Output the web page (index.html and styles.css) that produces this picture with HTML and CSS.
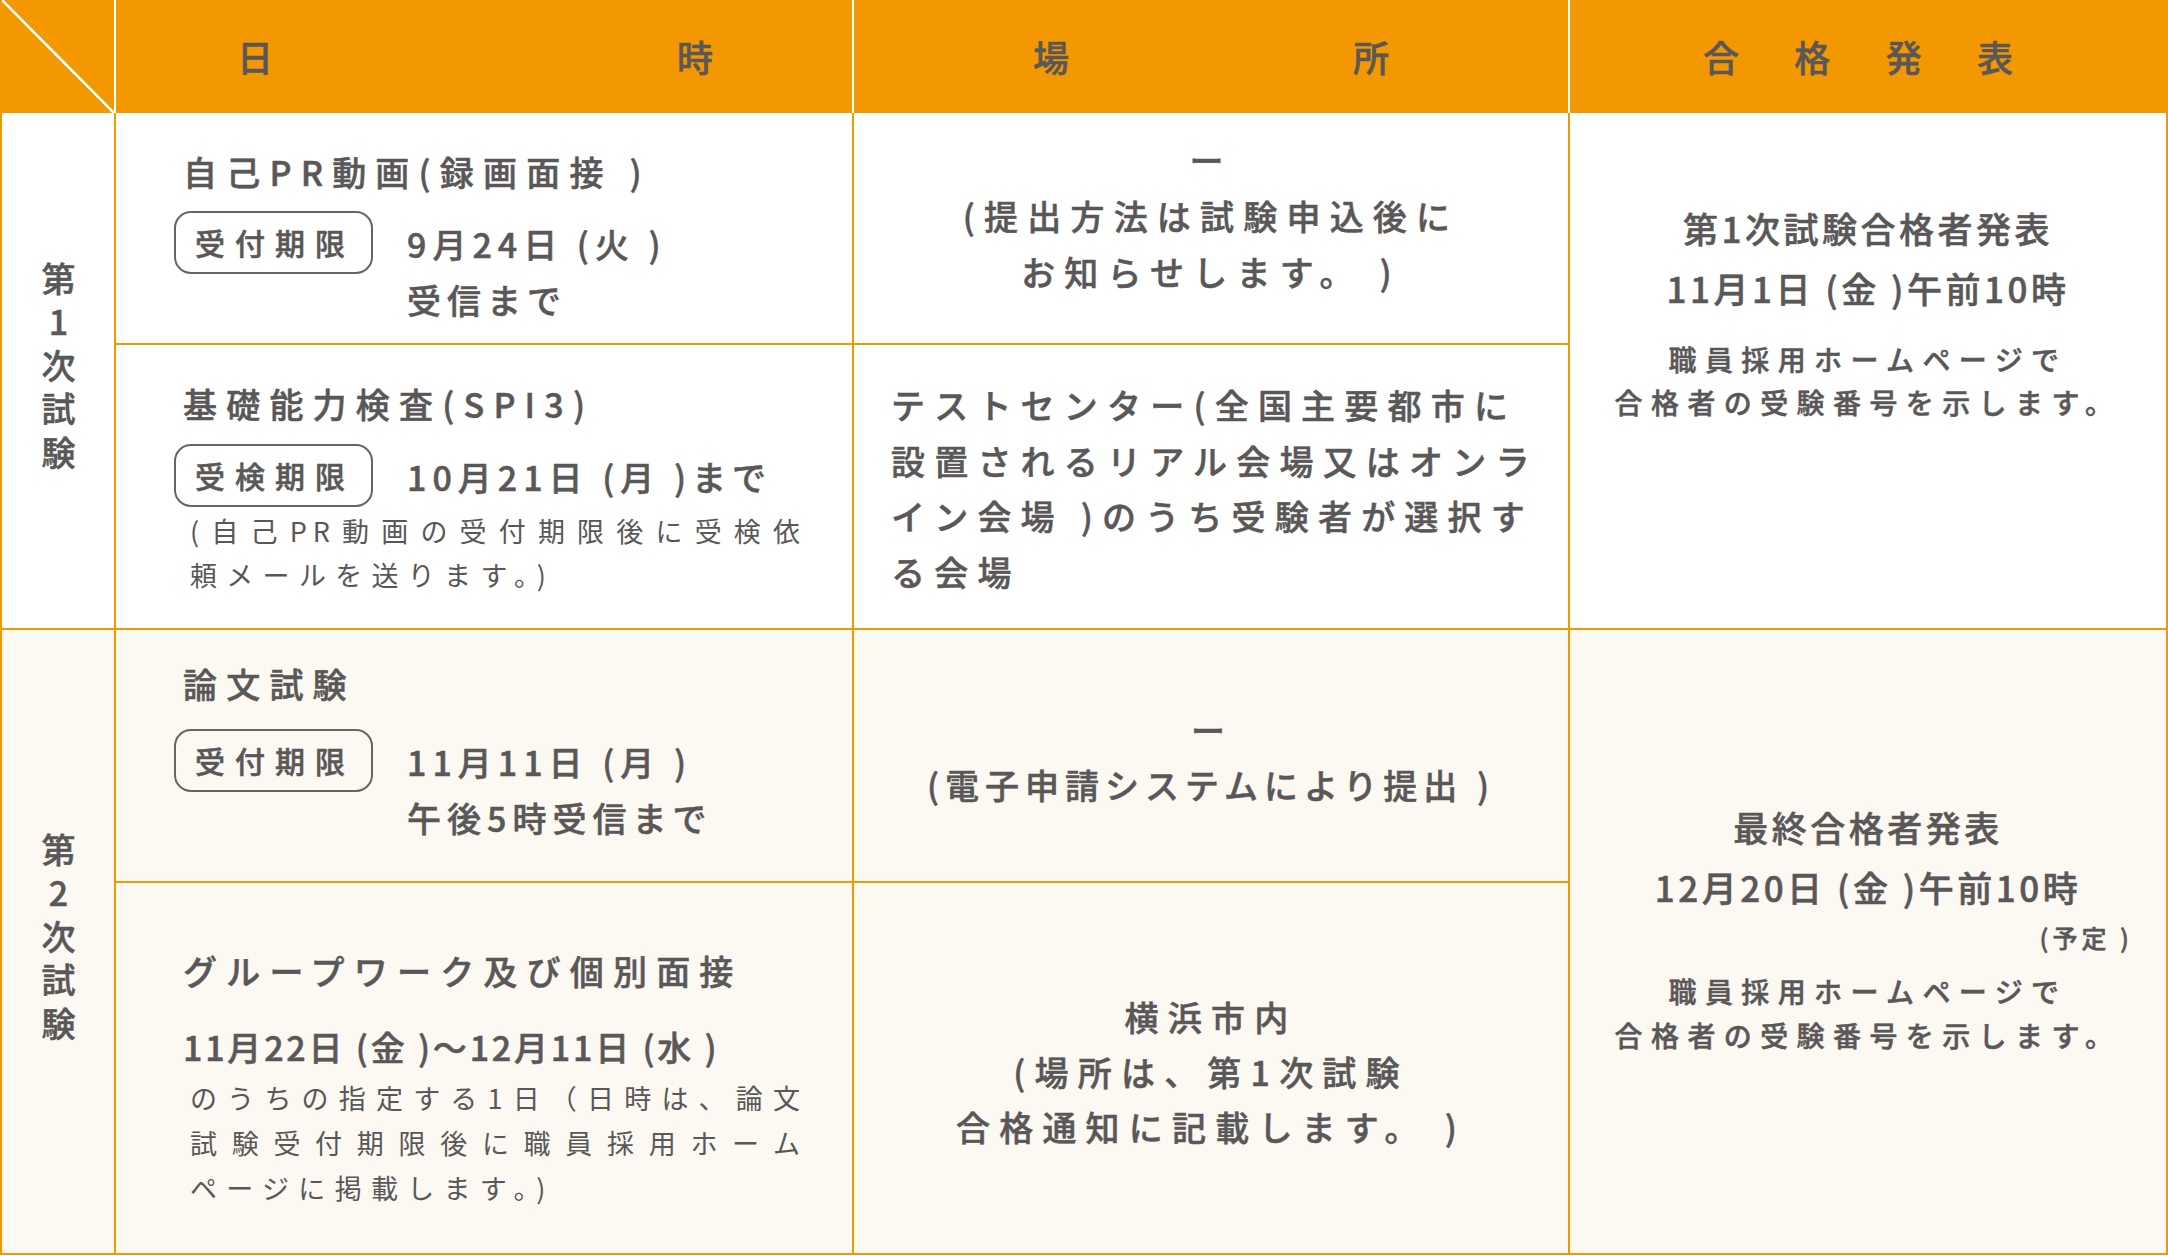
FILE: index.html
```html
<!DOCTYPE html>
<html lang="ja">
<head>
<meta charset="utf-8">
<title>試験日程</title>
<link rel="stylesheet" href="styles.css">
</head>
<body>
<div class="schedule">
  <div class="hd hd--corner"></div>
  <div class="hd hd--date"><span>日</span><span>時</span></div>
  <div class="hd hd--place"><span>場</span><span>所</span></div>
  <div class="hd hd--result"><span>合</span><span>格</span><span>発</span><span>表</span></div>

  <div class="stage stage--1"><span class="stage__label">第1次試験</span></div>

  <div class="cell date date--r1">
    <p class="title">自己PR動画(録画面接 )</p>
    <div class="deadline">
      <span class="badge">受付期限</span>
      <p class="when">9月24日 (火 )<br>受信まで</p>
    </div>
  </div>
  <div class="cell place place--r1">
    <p class="place__text">ー<br>(提出方法は試験申込後に<br>お知らせします。 )</p>
  </div>
  <div class="cell result result--s1">
    <p class="big">第1次試験合格者発表</p>
    <p class="big">11月1日 (金 )午前10時</p>
    <p class="small">職員採用ホームページで<br>合格者の受験番号を示します。</p>
  </div>

  <div class="cell date date--r2">
    <p class="title">基礎能力検査(SPI3)</p>
    <div class="deadline">
      <span class="badge">受検期限</span>
      <p class="when">10月21日 (月 )まで</p>
    </div>
    <p class="note note--r2">
      <span class="note__line note__line--fill">(自己PR動画の受付期限後に受検依</span>
      <span class="note__line">頼メールを送ります。)</span>
    </p>
  </div>
  <div class="cell place place--r2">
    <p class="place__text">テストセンター(全国主要都市に<br>設置されるリアル会場又はオンラ<br>イン会場 )のうち受験者が選択す<br>る会場</p>
  </div>

  <div class="stage stage--2"><span class="stage__label">第2次試験</span></div>

  <div class="cell date date--r3">
    <p class="title">論文試験</p>
    <div class="deadline">
      <span class="badge">受付期限</span>
      <p class="when">11月11日 (月 )<br>午後5時受信まで</p>
    </div>
  </div>
  <div class="cell place place--r3">
    <p class="place__text place__text--tight">ー<br>(電子申請システムにより提出 )</p>
  </div>
  <div class="cell result result--s2">
    <p class="big">最終合格者発表</p>
    <p class="big">12月20日 (金 )午前10時</p>
    <p class="plan">(予定 )</p>
    <p class="small">職員採用ホームページで<br>合格者の受験番号を示します。</p>
  </div>

  <div class="cell date date--r4">
    <p class="title">グループワーク及び個別面接</p>
    <p class="range">11月22日 (金 )〜12月11日 (水 )</p>
    <p class="note note--r4">
      <span class="note__line note__line--fill">のうちの指定する1日（日時は、論文</span>
      <span class="note__line note__line--fill">試験受付期限後に職員採用ホーム</span>
      <span class="note__line">ページに掲載します。)</span>
    </p>
  </div>
  <div class="cell place place--r4">
    <p class="place__text">横浜市内<br>(場所は、第1次試験<br>合格通知に記載します。 )</p>
  </div>
</div>
</body>
</html>
```

FILE: styles.css
```css
* {
  box-sizing: border-box;
}

html, body {
  margin: 0;
  padding: 0;
  background: #ffffff;
}

body {
  font-family: "Noto Sans CJK JP", "Noto Sans", sans-serif;
  color: #595757;
  font-weight: 500;
  -webkit-text-stroke: 0.5px #595757;
}

p {
  margin: 0;
}

.schedule {
  display: grid;
  width: 2168px;
  grid-template-columns: 114px 738px 716px 598px;
  grid-template-rows: 113px 232px 285px 253px 372px;
  border-left: 2px solid #f39800;
}

/* header */
.hd {
  background: #f39800;
  border-right: 2px solid #ffffff;
  display: flex;
  align-items: center;
  justify-content: space-between;
  padding-bottom: 2px;
  font-size: 36px;
  line-height: 1;
  color: #595757;
}

.hd--corner {
  grid-column: 1;
  grid-row: 1;
  background: linear-gradient(to top right,
    #f39800 calc(50% - 1.6px),
    #ffffff calc(50% - 1px),
    #ffffff calc(50% + 1px),
    #f39800 calc(50% + 1.6px));
}

.hd--date {
  grid-column: 2;
  grid-row: 1;
  padding-left: 121px;
  padding-right: 139px;
}

.hd--place {
  grid-column: 3;
  grid-row: 1;
  padding-left: 179px;
  padding-right: 179px;
}

.hd--result {
  grid-column: 4;
  grid-row: 1;
  padding-left: 133px;
  padding-right: 153px;
  border-right-color: #f39800;
}

/* stage label column */
.stage {
  border-right: 2px solid #f39800;
  border-bottom: 2px solid #f39800;
  display: flex;
  align-items: center;
  justify-content: center;
}

.stage--1 {
  grid-column: 1;
  grid-row: 2 / 4;
}

.stage--2 {
  grid-column: 1;
  grid-row: 4 / 6;
  background: #fcf8f2;
}

.stage__label {
  writing-mode: vertical-rl;
  text-orientation: upright;
  font-size: 34px;
  line-height: 1;
  letter-spacing: 9.5px;
}

/* body cells */
.cell {
  border-right: 2px solid #f39800;
  border-bottom: 2px solid #f39800;
}

.date {
  grid-column: 2;
  padding-left: 58px;
  padding-right: 20px;
}

.date--r1 { grid-row: 2; padding-top: 34px; }
.date--r2 { grid-row: 3; padding-top: 34px; }
.date--r3 { grid-row: 4; padding-top: 29px; background: #fcf8f2; }
.date--r4 { grid-row: 5; padding-top: 63px; background: #fcf8f2; }

.title {
  margin-left: 9px;
  font-size: 34px;
  line-height: 50px;
  letter-spacing: 9.2px;
  white-space: nowrap;
}

.deadline {
  display: flex;
  align-items: flex-start;
  gap: 34px;
  margin-top: 14px;
}

.date--r2 .deadline { margin-top: 15px; }
.date--r3 .deadline { margin-top: 20px; }

.badge {
  flex: none;
  border: 2px solid #666464;
  border-radius: 17px;
  padding: 0 16px 0 19px;
  font-size: 30px;
  line-height: 59px;
  letter-spacing: 10px;
}

.when {
  margin-top: 5px;
  font-size: 34px;
  line-height: 56px;
  letter-spacing: 6px;
  white-space: nowrap;
}

.range {
  margin-left: 9px;
  margin-top: 23px;
  font-size: 34px;
  line-height: 56px;
  letter-spacing: 2.8px;
  white-space: nowrap;
}

.note {
  width: 616px;
  margin-left: 16px;
  font-size: 27px;
  font-weight: 400;
  letter-spacing: 9.3px;
  -webkit-text-stroke: 0;
}

.note--r2 {
  margin-top: 2px;
  line-height: 44px;
}

.note--r4 {
  line-height: 45px;
}

.note__line {
  display: block;
  white-space: nowrap;
}

.note__line--fill {
  letter-spacing: 6px;
  text-align: justify;
  text-align-last: justify;
  white-space: normal;
}

/* place column */
.place {
  grid-column: 3;
  text-align: center;
}

.place__text {
  font-size: 34px;
  line-height: 56px;
  letter-spacing: 9.2px;
}

.place__text--tight {
  letter-spacing: 6px;
}

.place--r1 { grid-row: 2; padding-top: 19px; }
.place--r2 { grid-row: 3; padding: 32px 20px 0 37px; text-align: left; }
.place--r2 .place__text { line-height: 55.5px; }
.place--r3 { grid-row: 4; padding-top: 72px; background: #fcf8f2; }
.place--r3 .place__text { line-height: 55px; }
.place--r4 { grid-row: 5; padding-top: 106px; background: #fcf8f2; }
.place--r4 .place__text { line-height: 55px; }

/* result column */
.result {
  grid-column: 4;
  text-align: center;
}

.result--s1 {
  grid-row: 2 / 4;
  padding-top: 85px;
}

.result--s2 {
  grid-row: 4 / 6;
  padding-top: 167px;
  background: #fcf8f2;
}

.big {
  font-size: 35px;
  line-height: 60px;
  letter-spacing: 3.5px;
  white-space: nowrap;
}

.plan {
  text-align: right;
  padding-right: 33px;
  font-size: 25px;
  line-height: 40px;
  letter-spacing: 4px;
}

.small {
  font-size: 28px;
  letter-spacing: 8.4px;
  white-space: nowrap;
}

.result--s1 .small {
  margin-top: 20px;
  line-height: 43px;
}

.result--s2 .small {
  margin-top: 12px;
  line-height: 44px;
}
```
